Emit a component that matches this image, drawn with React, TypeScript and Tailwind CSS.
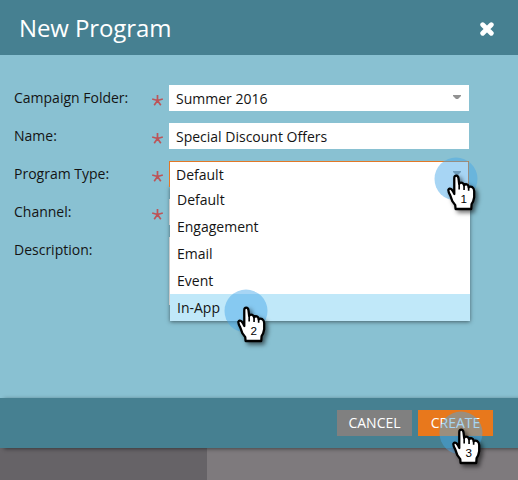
import React from "react";

function Label({ children }: { children: React.ReactNode }) {
  return <span className="w-[137px] shrink-0 leading-[26px]">{children}</span>;
}

function Asterisk() {
  return (
    <svg className="mt-[9px] mr-[5px] h-[13px] w-[13px] shrink-0" viewBox="0 0 13 13" fill="none" stroke="#bd5458" strokeWidth="1.7">
      <path d="M6.5 6.5V1M6.5 6.5L1.2 5M6.5 6.5L11.8 5M6.5 6.5L3.2 11.2M6.5 6.5L9.8 11.2" />
    </svg>
  );
}

function Caret({ className }: { className: string }) {
  return (
    <svg className={"h-[4px] w-[8px] " + className} viewBox="0 0 8 4" fill="#929292">
      <path d="M0 0H8V1L5 4H3L0 1Z" />
    </svg>
  );
}

function Pointer({ step, className }: { step: number; className: string }) {
  return (
    <div className={"pointer-events-none absolute h-[60px] w-[60px] " + className}>
      <svg className="h-full w-full overflow-visible" viewBox="0 0 180 180">
        <circle cx="63" cy="63" r="64.5" fill="#48a8e8" fillOpacity=".48" />
        <g className="[filter:drop-shadow(8px_8px_6px_rgba(0,0,0,0.55))]" transform="translate(-1 7) scale(.98)">
          <path
            d="M60 97V55Q60 47 66 47Q72 47 73 55L75 72Q78 67 84 69Q89 71 90 76Q95 71 101 75Q104 78 104 83Q109 79 115 82Q121 86 121 94V113Q119 126 113 134L112 149H64L63 137L54 125L48 108Q41 96 42 90Q45 84 51 88Q56 92 60 103Z"
            fill="white"
            stroke="black"
            strokeWidth="7"
            strokeLinejoin="round"
          />
          <path d="M75 72V89M90 76V91M104 83V93" stroke="black" strokeWidth="5" />
        </g>
        <text x="86" y="136" textAnchor="middle" className="font-['Liberation_Sans',sans-serif] text-[35px]" fill="black">
          {step}
        </text>
      </svg>
    </div>
  );
}

const options = ["Default", "Engagement", "Email", "Event", "In-App"];

export default function App() {
  return (
    <div className="relative flex h-[480px] w-[518px] flex-col overflow-hidden bg-[#7e7a7d] font-['Open_Sans',sans-serif] text-[14px] text-[#141414]">
      <header className="flex h-[55px] shrink-0 items-center justify-between bg-[#468091] pr-[24px] pl-[19px] text-white">
        <h1 className="text-[24px] leading-[32px] tracking-[-0.1px]">New Program</h1>
        <svg className="mt-[3px] h-[14px] w-[14px]" viewBox="0 0 14 14" stroke="white" strokeWidth="4.8" strokeLinecap="round">
          <path d="M2.7 2.7L11.3 11.3M11.3 2.7L2.7 11.3" />
        </svg>
      </header>

      <main className="flex h-[343px] shrink-0 flex-col gap-[12px] bg-[#89c1d2] pt-[30px] pl-[14px]">
        <div className="flex h-[26px]">
          <Label>Campaign Folder:</Label>
          <Asterisk />
          <div className="flex w-[300px] justify-between bg-white pl-[7px] leading-[28px]">
            Summer 2016
            <Caret className="mt-[10px] mr-[8px]" />
          </div>
        </div>
        <div className="flex h-[26px]">
          <Label>Name:</Label>
          <Asterisk />
          <div className="w-[300px] bg-white pl-[7px] leading-[28px]">Special Discount Offers</div>
        </div>
        <div className="relative z-10 flex h-[26px]">
          <Label>Program Type:</Label>
          <Asterisk />
          <div className="relative z-10 flex w-[300px] justify-between border border-b-0 border-[#e27826] bg-white pl-[6px] leading-[26px]">
            Default
            <Caret className="mt-[9px] mr-[7px]" />
          </div>
          <ul className="absolute top-[25px] left-[156px] w-[300px] bg-white shadow-[0_1px_4px_rgba(0,0,0,0.5)]">
            {options.map((option) => (
              <li
                key={option}
                className={"h-[27px] pl-[7px] leading-[27px] " + (option === "In-App" ? "bg-[#c0e8f9]" : "")}
              >
                {option}
              </li>
            ))}
          </ul>
        </div>
        <div className="flex h-[26px]">
          <Label>Channel:</Label>
          <Asterisk />
          <div className="w-[300px] bg-white" />
        </div>
        <div className="flex h-[68px]">
          <Label>Description:</Label>
          <div className="ml-[18px] w-[300px] bg-white" />
        </div>
      </main>

      <footer className="z-[1] flex h-[50px] shrink-0 gap-[6px] bg-[#468091] pt-[12px] pl-[337px] text-white shadow-[4px_1px_4px_rgba(0,0,0,0.45)]">
        <button className="h-[26px] w-[75px] bg-[#808080] leading-[26px]">CANCEL</button>
        <button className="h-[26px] w-[75px] bg-[#e8781c] leading-[26px]">CREATE</button>
      </footer>
      <div className="flex-1 pr-[311px]">
        <div className="h-full bg-[#666367]" />
      </div>

      <Pointer step={1} className="top-[157.5px] left-[434.5px] z-20" />
      <Pointer step={2} className="top-[289.5px] left-[224.5px] z-20" />
      <Pointer step={3} className="top-[411.5px] left-[439.5px] z-20" />
    </div>
  );
}
